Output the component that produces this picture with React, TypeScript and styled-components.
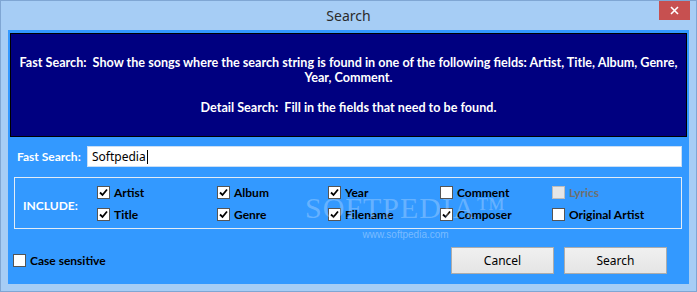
import React from 'react';
import styled, { createGlobalStyle } from 'styled-components';

const GlobalStyle = createGlobalStyle`
	html, body {
		margin: 0;
		padding: 0;
		background: #ffffff;
	}
	body {
		font-family: Lato, 'Noto Sans', sans-serif;
	}
`;

const StyledWindow = styled.div`
	position: relative;
	width: 697px;
	height: 292px;
	box-sizing: border-box;
	border: 1px solid #7fa6d3;
	background-color: #a6cdf5;
	padding: 0 7px 7px 7px;
	display: flex;
	flex-direction: column;
	overflow: hidden;
`;

const StyledTitleBar = styled.div`
	height: 29px;
	display: grid;
	grid-template-columns: 1fr auto 1fr;
	align-items: start;
`;

const StyledTitle = styled.div`
	grid-column: 2;
	font-family: 'Noto Sans', sans-serif;
	font-size: 14px;
	color: #2b2b2b;
	line-height: 29px;
`;

const StyledClose = styled.div`
	grid-column: 3;
	justify-self: end;
	margin: -1px -1px 0 0;
	width: 31px;
	height: 20px;
	background-color: #c75050;
	display: flex;
	align-items: center;
	justify-content: center;
`;

const StyledClient = styled.div`
	flex: 1;
	background-color: #3399ff;
	padding: 3px 2px 0 2px;
	display: flex;
	flex-direction: column;
`;

const StyledInfoBox = styled.div`
	height: 104px;
	box-sizing: border-box;
	border: 1px solid #000000;
	background-color: #000080;
	color: #ffffff;
	font-weight: bold;
	font-size: 12.6px;
	line-height: 15px;
	text-align: center;
	display: flex;
	flex-direction: column;
	justify-content: center;
	padding: 0 4px;
	white-space: nowrap;
`;

const StyledBody = styled.div`
	padding: 9px 5px 0 4px;
	display: flex;
	flex-direction: column;
`;

const StyledSearchRow = styled.div`
	display: flex;
	align-items: center;
	height: 21px;
`;

const StyledLabel = styled.span`
	color: #ffffff;
	font-weight: bold;
	font-size: 12px;
	width: 70px;
	padding-left: 3px;
	white-space: nowrap;
`;

const StyledInput = styled.div`
	flex: 1;
	height: 21px;
	box-sizing: border-box;
	background: #ffffff;
	border: 1px solid #c9def5;
	font-family: 'Noto Sans', sans-serif;
	font-size: 12px;
	padding: 0 4px;
	display: flex;
	align-items: center;
	color: #000000;
`;

const StyledCaret = styled.span`
	display: inline-block;
	width: 1px;
	height: 14px;
	background: #000000;
	margin-left: 1px;
`;

const StyledGroup = styled.div`
	margin-top: 10px;
	height: 52px;
	box-sizing: border-box;
	border: 1px solid #e3ecf6;
	display: grid;
	grid-template-columns: 82px 120px 111px 112px 112px auto;
	grid-template-rows: 22px 22px;
	align-content: center;
	padding-top: 1px;
`;

const StyledGroupLabel = styled.div`
	grid-row: 1 / 3;
	align-self: center;
	padding-left: 8px;
	color: #ffffff;
	font-weight: bold;
	font-size: 12px;
	padding-top: 3px;
`;

const StyledCheckRow = styled.label<{ $disabled?: boolean }>`
	display: flex;
	align-items: center;
	gap: 4px;
	font-weight: bold;
	font-size: 12px;
	color: ${(p) => (p.$disabled ? '#6f6f6f' : '#000000')};
	white-space: nowrap;
`;

const StyledBox = styled.span<{ $disabled?: boolean }>`
	width: 13px;
	height: 13px;
	box-sizing: border-box;
	border: 1px solid ${(p) => (p.$disabled ? '#bcbcbc' : '#555555')};
	background: ${(p) => (p.$disabled ? '#e6e6e6' : '#ffffff')};
	display: flex;
	align-items: center;
	justify-content: center;
	flex-shrink: 0;
`;

const StyledFooter = styled.div`
	margin: 18px 0 0 -1px;
	display: flex;
	align-items: center;
	padding-right: 15px;
`;

const StyledSpacer = styled.div`
	flex: 1;
`;

const StyledButton = styled.button`
	width: 103px;
	height: 27px;
	box-sizing: border-box;
	border: 1px solid #acacac;
	background: linear-gradient(#f0f0f0, #e5e5e5);
	font-family: 'Noto Sans', sans-serif;
	font-size: 12px;
	color: #000000;
	padding: 0;
	& + & {
		margin-left: 10px;
	}
`;

const StyledWatermark = styled.div`
	position: absolute;
	left: 304px;
	top: 191px;
	pointer-events: none;
	color: rgba(255, 255, 255, 0.26);
	font-family: 'Liberation Serif', serif;
	text-align: center;
`;

const StyledMarkBig = styled.div`
	font-size: 30px;
	letter-spacing: 1px;
	line-height: 32px;
`;

const StyledMarkSmall = styled.div`
	font-family: 'Liberation Sans', sans-serif;
	font-size: 10px;
	margin-top: 5px;
	color: rgba(255, 255, 255, 0.35);
`;

const Check: React.FC = () => (
	<svg width="9" height="9" viewBox="0 0 9 9">
		<path d="M1 4.5 L3.5 7 L8 1.5" stroke="#000" strokeWidth="1.8" fill="none" />
	</svg>
);

interface CheckProps {
	label: string;
	checked?: boolean;
	disabled?: boolean;
}

const CheckItem: React.FC<CheckProps> = ({ label, checked, disabled }) => (
	<StyledCheckRow $disabled={disabled}>
		<StyledBox $disabled={disabled}>{checked && <Check />}</StyledBox>
		{label}
	</StyledCheckRow>
);

const fields: CheckProps[] = [
	{ label: 'Artist', checked: true },
	{ label: 'Album', checked: true },
	{ label: 'Year', checked: true },
	{ label: 'Comment' },
	{ label: 'Lyrics', disabled: true },
	{ label: 'Title', checked: true },
	{ label: 'Genre', checked: true },
	{ label: 'Filename', checked: true },
	{ label: 'Composer', checked: true },
	{ label: 'Original Artist' },
];

const App: React.FC = () => {
	return (
		<>
			<GlobalStyle />
			<StyledWindow>
				<StyledTitleBar>
					<StyledTitle>Search</StyledTitle>
					<StyledClose>
						<svg width="9" height="9" viewBox="0 0 9 9">
							<path d="M1 1 L8 8 M8 1 L1 8" stroke="#fff" strokeWidth="1.6" />
						</svg>
					</StyledClose>
				</StyledTitleBar>
				<StyledClient>
					<StyledInfoBox>
						<div>
							Fast Search:&nbsp; Show the songs where the search string is found in one of
							the following fields: Artist, Title, Album, Genre,
						</div>
						<div>Year, Comment.</div>
						<div>&nbsp;</div>
						<div>Detail Search:&nbsp; Fill in the fields that need to be found.</div>
					</StyledInfoBox>
					<StyledBody>
						<StyledSearchRow>
							<StyledLabel>Fast Search:</StyledLabel>
							<StyledInput>
								Softpedia
								<StyledCaret />
							</StyledInput>
						</StyledSearchRow>
						<StyledGroup>
							<StyledGroupLabel>INCLUDE:</StyledGroupLabel>
							{fields.map((f) => (
								<CheckItem key={f.label} {...f} />
							))}
						</StyledGroup>
						<StyledFooter>
							<CheckItem label="Case sensitive" />
							<StyledSpacer />
							<StyledButton>Cancel</StyledButton>
							<StyledButton>Search</StyledButton>
						</StyledFooter>
					</StyledBody>
				</StyledClient>
				<StyledWatermark>
					<StyledMarkBig>SOFTPEDIA™</StyledMarkBig>
					<StyledMarkSmall>www.softpedia.com</StyledMarkSmall>
				</StyledWatermark>
			</StyledWindow>
		</>
	);
};

export default App;
